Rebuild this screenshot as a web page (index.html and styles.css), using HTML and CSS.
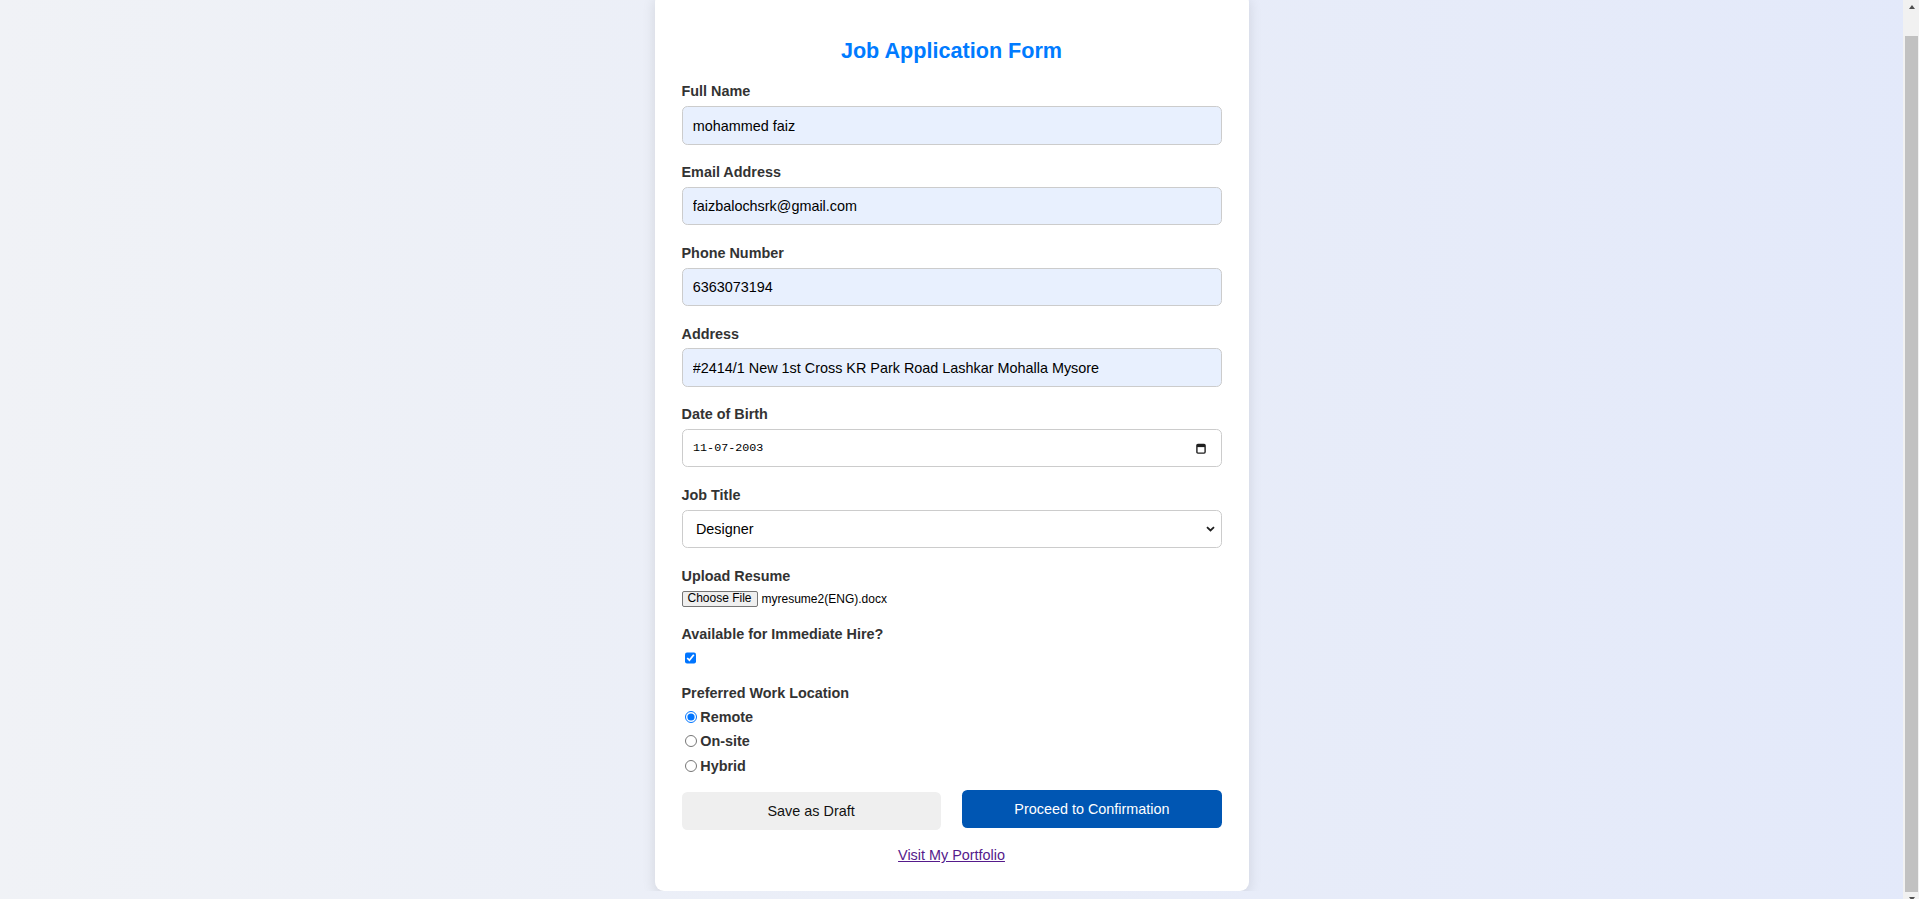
FILE: index.html
```html
<!DOCTYPE html>
<html lang="en">
<head>
<meta charset="utf-8">
<title>Job Application Form</title>
<link rel="stylesheet" href="styles.css">
</head>
<body>
<main class="card">
  <h1 class="title">Job Application Form</h1>
  <form class="form" onsubmit="return false;">
    <div class="field">
      <label class="label" for="fullname">Full Name</label>
      <input class="input filled" id="fullname" type="text" value="mohammed faiz">
    </div>
    <div class="field">
      <label class="label" for="email">Email Address</label>
      <input class="input filled" id="email" type="email" value="faizbalochsrk@gmail.com">
    </div>
    <div class="field">
      <label class="label" for="phone">Phone Number</label>
      <input class="input filled" id="phone" type="tel" value="6363073194">
    </div>
    <div class="field">
      <label class="label" for="address">Address</label>
      <input class="input filled" id="address" type="text" value="#2414/1 New 1st Cross KR Park Road Lashkar Mohalla Mysore">
    </div>
    <div class="field">
      <label class="label">Date of Birth</label>
      <div class="input date">
        <span class="date-text">11-07-2003</span>
        <svg class="cal" width="10" height="11" viewBox="0 0 10 11" aria-hidden="true">
          <rect x="0.9" y="1.4" width="8.2" height="8.7" rx="1" fill="none" stroke="#1f1f1f" stroke-width="1.4"/>
          <rect x="1" y="1.5" width="8" height="2.6" fill="#1f1f1f"/>
        </svg>
      </div>
    </div>
    <div class="field">
      <label class="label" for="job">Job Title</label>
      <div class="select-wrap">
        <select class="input select" id="job">
          <option>Designer</option>
          <option>Developer</option>
          <option>Manager</option>
        </select>
        <svg class="chevron" width="9" height="6" viewBox="0 0 9 6" aria-hidden="true">
          <path d="M1 1.2l3.5 3.3 3.5-3.3" fill="none" stroke="#1f1f1f" stroke-width="1.8"/>
        </svg>
      </div>
    </div>
    <div class="field">
      <label class="label">Upload Resume</label>
      <div class="file-row">
        <button type="button" class="file-btn">Choose File</button>
        <span class="file-name">myresume2(ENG).docx</span>
      </div>
    </div>
    <div class="field">
      <label class="label" for="hire">Available for Immediate Hire?</label>
      <div class="check-row">
        <input class="check" id="hire" type="checkbox" checked>
      </div>
    </div>
    <div class="field radio-field">
      <label class="label">Preferred Work Location</label>
      <div class="radios">
        <label class="radio-row"><input type="radio" name="loc" checked>Remote</label>
        <label class="radio-row"><input type="radio" name="loc">On-site</label>
        <label class="radio-row"><input type="radio" name="loc">Hybrid</label>
      </div>
    </div>
    <div class="actions">
      <button type="button" class="btn btn-draft">Save as Draft</button>
      <button type="button" class="btn btn-primary">Proceed to Confirmation</button>
    </div>
  </form>
  <p class="portfolio"><a href="#">Visit My Portfolio</a></p>
</main>
<div class="scrollbar" aria-hidden="true">
  <span class="sb-btn sb-up"><span class="arrow-up"></span></span>
  <span class="sb-thumb"></span>
  <span class="sb-btn sb-down"><span class="arrow-down"></span></span>
</div>
<script src="script.js"></script>
</body>
</html>
```

FILE: styles.css
```css
html {
  background: linear-gradient(to right, #f0f2f6, #e3e9fa);
  min-height: 100%;
  scrollbar-width: none;
}

body {
  margin: 8px 24px 8px 8px;
  font-family: "Liberation Sans", Arial, sans-serif;
  display: flex;
  justify-content: center;
}

.card {
  width: 594px;
  box-sizing: border-box;
  padding: 27px;
  background: #fff;
  border-radius: 9px;
  box-shadow: 0 4px 14px rgba(0, 0, 0, 0.11);
}

.title {
  margin: 19px 0 19.7px;
  text-align: center;
  font-size: 21.6px;
  line-height: 24.8px;
  font-weight: bold;
  color: #007bff;
}

.form {
  margin: 0;
}

.field {
  margin-bottom: 19.4px;
}

.label {
  display: block;
  font-size: 14.4px;
  line-height: 16.5px;
  font-weight: bold;
  color: #333;
  margin-bottom: 6.4px;
}

.input {
  display: block;
  width: 100%;
  height: 38.4px;
  box-sizing: border-box;
  margin: 0;
  padding: 0 10.3px;
  border: 1px solid #ccc;
  border-radius: 5.4px;
  font-family: "Liberation Sans", Arial, sans-serif;
  font-size: 14.4px;
  color: #000;
  background: #fff;
  outline: none;
}

.filled {
  background: #e8f0fe;
}

.date {
  display: flex;
  align-items: center;
  justify-content: space-between;
  padding: 0 14.5px 0 10.6px;
}

.date-text {
  font-family: "Liberation Mono", "DejaVu Sans Mono", monospace;
  font-size: 11.7px;
  color: #000;
}

.cal {
  display: block;
}

.select-wrap {
  position: relative;
}

.select {
  appearance: none;
  -webkit-appearance: none;
  padding-left: 13.4px;
}

.chevron {
  position: absolute;
  right: 6.5px;
  top: 16.5px;
  pointer-events: none;
}

.file-row {
  display: flex;
  align-items: center;
  gap: 4px;
  height: 16.5px;
  font-size: 12px;
  color: #000;
}

.file-btn {
  box-sizing: border-box;
  height: 16px;
  margin: 0;
  padding: 0 5px;
  border: 1px solid #767676;
  border-radius: 2px;
  background: #efefef;
  font-family: "Liberation Sans", Arial, sans-serif;
  font-size: 12px;
  line-height: 13px;
  color: #000;
}

.file-name {
  font-size: 12px;
  line-height: 14px;
}

.check-row {
  height: 16.3px;
  padding-top: 2.7px;
  box-sizing: border-box;
}

.check {
  display: block;
  width: 11.7px;
  height: 11.7px;
  margin: 0 0 0 3px;
}

.radio-field {
  margin-bottom: 17.5px;
}

.radios {
  display: flex;
  flex-direction: column;
  gap: 6.5px;
}

.radio-row {
  display: flex;
  align-items: center;
  height: 18px;
  font-size: 14.4px;
  line-height: 16.5px;
  font-weight: bold;
  color: #333;
}

.radio-row input {
  width: 11.6px;
  height: 11.6px;
  margin: 0 3.5px 0 3.7px;
}

.actions {
  display: flex;
  justify-content: space-between;
  align-items: flex-start;
}

.btn {
  width: 48%;
  height: 37.5px;
  border: none;
  border-radius: 5.4px;
  font-family: "Liberation Sans", Arial, sans-serif;
  font-size: 14.4px;
  cursor: pointer;
}

.btn-draft {
  background: #efefef;
  color: #111;
}

.btn-primary {
  background: #0056b3;
  color: #fff;
  transform: translateY(-2px);
}

.portfolio {
  margin: 17.5px 0 0;
  text-align: center;
  font-size: 14.4px;
  line-height: 16.5px;
}

.portfolio a {
  color: #551a8b;
}

/* visual replica of the browser's classic scrollbar */
.scrollbar {
  position: fixed;
  top: 0;
  right: 0;
  width: 16px;
  height: 100vh;
  background: #f1f1f1;
  display: flex;
  flex-direction: column;
  overflow: hidden;
}

.sb-btn {
  flex: none;
  height: 17px;
  display: flex;
  justify-content: center;
  box-sizing: border-box;
  padding-left: 1px;
}

.sb-up {
  padding-top: 5px;
}

.sb-down {
  padding-top: 5px;
}

.arrow-up {
  width: 0;
  height: 0;
  border-left: 3.5px solid transparent;
  border-right: 3.5px solid transparent;
  border-bottom: 4px solid #505050;
}

.arrow-down {
  width: 0;
  height: 0;
  border-left: 3.5px solid transparent;
  border-right: 3.5px solid transparent;
  border-top: 4px solid #505050;
}

.sb-thumb {
  flex: none;
  height: 856px;
  margin: 19px 1px 0 2px;
  background: #c1c1c1;
}
```

FILE: script.js
```js
function toBottom() {
  window.scrollTo(0, document.documentElement.scrollHeight);
}
toBottom();
window.addEventListener('load', toBottom);
```
